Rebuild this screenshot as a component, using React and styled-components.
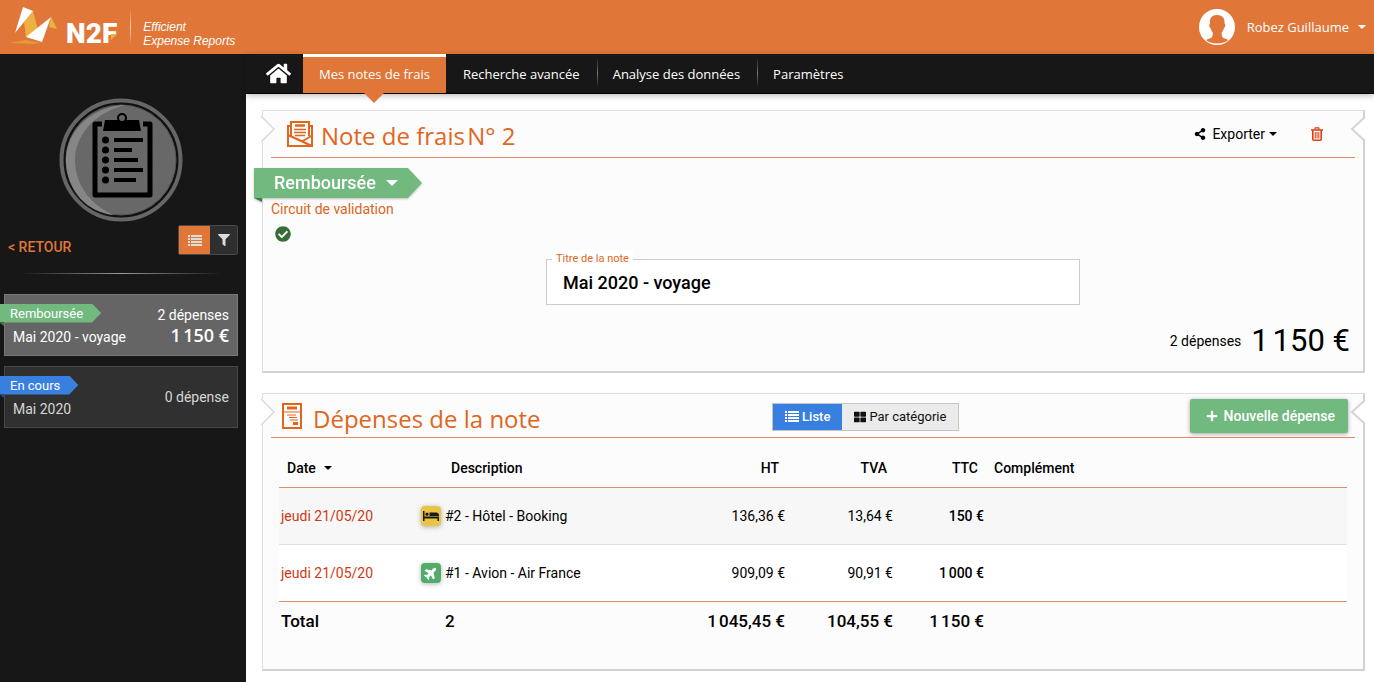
import React from 'react'
import styled, { createGlobalStyle } from 'styled-components'
import { FaHome, FaShareAlt, FaCheckCircle, FaPlus, FaFilter, FaThLarge, FaPlane } from 'react-icons/fa'

const orange = '#e07638'
const green = '#72b980'
const blue = '#3880df'

const BedIcon = () => (
    <svg width="16" height="10" viewBox="0 0 16 10" fill="currentColor" aria-hidden="true">
        <path d="M0 0h1.500v5.500H16V10h-1.500V7.500h-13V10H0z" />
        <circle cx="4" cy="3.200" r="1.600" />
        <path d="M6.500 1.500H13c1.800 0 3 1.200 3 3.200v.3H6.500z" />
    </svg>
)

const notes = [
    { status: 'Remboursée', color: green, fold: '#3f7d4b', title: 'Mai 2020 - voyage', count: '2 dépenses', amount: '1\u202f150 €', selected: true },
    { status: 'En cours', color: blue, fold: '#1c4c8e', title: 'Mai 2020', count: '0 dépense' },
]

const expenses = [
    { date: 'jeudi 21/05/20', icon: <BedIcon />, iconBg: '#eac545', iconColor: '#1b1b1b', label: '#2 - Hôtel - Booking', ht: '136,36 €', tva: '13,64 €', ttc: '150 €' },
    { date: 'jeudi 21/05/20', icon: <FaPlane size={14} />, iconBg: '#50ac66', iconColor: '#fff', tilt: true, label: '#1 - Avion - Air France', ht: '909,09 €', tva: '90,91 €', ttc: '1\u202f000 €' },
]

const ListIcon = () => (
    <svg width="14" height="11" viewBox="0 0 14 11" fill="currentColor" aria-hidden="true">
        {[0, 3, 6, 9].map(y => (
            <g key={y}>
                <rect x="0" y={y} width="2" height="2" />
                <rect x="3" y={y} width="11" height="2" />
            </g>
        ))}
    </svg>
)

const Caret = ({ width = 8 }) => (
    <svg width={width} height={width / 2} viewBox="0 0 8 4" fill="currentColor" aria-hidden="true">
        <path d="M0 0h8L4 4z" />
    </svg>
)

const TrashIcon = () => (
    <svg width="12" height="14" viewBox="0 0 12 14" fill="none" stroke="currentColor" aria-hidden="true">
        <path d="M0 3h12" strokeWidth="1.500" />
        <path d="M3.800 2.800L4.300.8h3.400l.5 2" strokeWidth="1.200" />
        <path d="M1.800 3v9.200c0 .6.4 1 1 1h6.400c.6 0 1-.4 1-1V3" strokeWidth="1.600" />
        <path d="M4.200 5v6.500M6 5v6.500M7.800 5v6.500" />
    </svg>
)

const Bird = () => (
    <svg width="50" height="40" viewBox="0 0 50 40" aria-hidden="true">
        <path d="M1 36l17-3 14 3-6 1z" fill="#e39a3c" />
        <path d="M25 4l-9 11 2 15 3 0 9-7z" fill="#edb143" />
        <path d="M43 10l6 12-8-2z" fill="#edb143" />
        <path d="M15 0l10 4L7 26z" fill="#fff" />
        <path d="M43 10L34 35 18 30z" fill="#fff" />
    </svg>
)

const Avatar = () => (
    <svg width="36" height="36" viewBox="0 0 36 36" aria-hidden="true">
        <circle cx="18" cy="18" r="18" fill="#fff" />
        <path d="M18 6c5 0 8 3 7.500 8 0 1 1 1 .7 3-.3 1.500-1 1.500-1.200 2-.5 2-1.500 3.500-2.300 4.500 0 4 .3 5.500 4.800 6.500 1 .3 1.500 1 1.500 1.600C26 33.500 22 34.500 18 34.500S10 33.500 7.500 31.600c0-.6.5-1.300 1.500-1.600 4.500-1 4.800-2.500 4.800-6.500-.8-1-1.800-2.500-2.300-4.500-.2-.5-.9-.5-1.200-2-.3-2 .7-2 .7-3C10.500 9 13 6 18 6z" fill={orange} />
    </svg>
)

const ClipboardBadge = () => (
    <svg width="124" height="124" viewBox="0 0 124 124" aria-hidden="true">
        <defs>
            <pattern id="weave" width="3" height="3" patternUnits="userSpaceOnUse">
                <rect width="3" height="3" fill="#666" />
                <path d="M0 3L3 0" stroke="#6c6c6c" strokeWidth="1" />
            </pattern>
        </defs>
        <circle cx="62" cy="62" r="59.500" fill="#111" stroke="#666" strokeWidth="4" />
        <circle cx="62" cy="62" r="55" fill="url(#weave)" stroke="#555" />
        <path d="M68 7C36 7 7 31 7 62s22 53 48 55C31 107 16 86 16 62S36 13 68 7z" fill="#868686" />
        <path d="M43 26h-7v71h55V26h-7" fill="none" stroke="#000" strokeWidth="5" strokeLinejoin="round" />
        <path d="M46 22h34l2 11H44z" fill="#000" />
        <circle cx="63" cy="20" r="4" fill="#666" stroke="#000" strokeWidth="2" />
        {[29, 18, 24, 29, 22].map((w, i) => (
            <g key={i}>
                <circle cx="46.500" cy={42 + i * 10} r="3.500" />
                <rect x="55" y={40 + i * 10} width={w} height="4" />
            </g>
        ))}
    </svg>
)

const EnvelopeIcon = () => (
    <svg width="28" height="28" viewBox="0 0 28 28" fill="none" stroke="#e0661c" strokeWidth="2" aria-hidden="true">
        <path d="M5 6L2 6v20h24V6h-3" />
        <path d="M5 16V2h18v14" />
        <path d="M2 15l24 11M26 15.500l-10 6" />
        <path d="M9 5.500h10" strokeWidth="2.500" />
        <path d="M8 9.500h12M8 12.500h12M9 15.500h10" strokeWidth="1.500" />
    </svg>
)

const ReceiptIcon = () => (
    <svg width="22" height="28" viewBox="0 0 22 28" fill="none" stroke="#e0661c" strokeWidth="2" aria-hidden="true">
        <path d="M2 2h18v24H2z" />
        <path d="M6 6h10M12 21.500h5" strokeWidth="3" />
        <path d="M3 10h16" strokeWidth="1" />
        <path d="M6 13h9M8 15.500h8M9 18h8" strokeWidth="1.200" />
    </svg>
)

const Notch = ({ right }) => (
    <NotchBox $right={right}>
        <svg width="16" height="28" viewBox="0 0 16 28" aria-hidden="true">
            {right
                ? <><path d="M16 2L3 14l13 12z" fill="#fff" /><path d="M15 2L2 14l13 12" fill="none" stroke="#d4d4d4" strokeWidth="2" /></>
                : <><path d="M0 0l14 14L0 28z" fill="#fff" /><path d="M0 1l13 13L0 27" fill="none" stroke="#d9d9d9" strokeWidth="1.500" /></>}
        </svg>
    </NotchBox>
)

export default function App() {
    return (
        <Page>
            <GlobalStyle />
            <Header>
                <Brand href="#">
                    <Bird />
                    <BrandName>N2F<i /></BrandName>
                    <BrandLine />
                    <Tagline>Efficient<br />Expense Reports</Tagline>
                </Brand>
                <UserMenu><Avatar /><span>Robez Guillaume</span><Caret /></UserMenu>
            </Header>
            <Body>
                <Sidebar>
                    <BadgeBox><ClipboardBadge /></BadgeBox>
                    <SideTools>
                        <Back href="#">&lt; RETOUR</Back>
                        <ToolGroup>
                            <Tool $on aria-label="Liste"><ListIcon /></Tool>
                            <Tool aria-label="Filtrer"><FaFilter size={12} /></Tool>
                        </ToolGroup>
                    </SideTools>
                    <SideLine />
                    <NoteList>
                        {notes.map(n => (
                            <NoteCard key={n.title} $selected={n.selected}>
                                <div>
                                    <SmallRibbon $color={n.color} $fold={n.fold}><span>{n.status}</span></SmallRibbon>
                                    <NoteTitle>{n.title}</NoteTitle>
                                </div>
                                <NoteFigures>
                                    <span>{n.count}</span>
                                    {n.amount && <strong>{n.amount}</strong>}
                                </NoteFigures>
                            </NoteCard>
                        ))}
                    </NoteList>
                </Sidebar>
                <Main>
                    <Nav>
                        <HomeLink href="#" aria-label="Accueil"><FaHome size={25} /></HomeLink>
                        <NavLink href="#" $active>Mes notes de frais</NavLink>
                        <NavLink href="#">Recherche avancée</NavLink>
                        <NavLink href="#" $line>Analyse des données</NavLink>
                        <NavLink href="#" $line>Paramètres</NavLink>
                    </Nav>
                    <Content>
                        <Panel>
                            <Notch /><Notch right />
                            <PanelHead $height={47}>
                                <Title $indent={15}><EnvelopeIcon /><h1>Note de frais&#8202;N° 2</h1></Title>
                                <Actions>
                                    <Export><FaShareAlt size={12} />Exporter<Caret /></Export>
                                    <Trash aria-label="Supprimer"><TrashIcon /></Trash>
                                </Actions>
                            </PanelHead>
                            <BigRibbon><span>Remboursée<Caret width={12} /></span></BigRibbon>
                            <Circuit href="#">Circuit de validation</Circuit>
                            <Step><FaCheckCircle size={16} /></Step>
                            <Field>
                                <label htmlFor="titre">Titre de la note</label>
                                <input id="titre" type="text" defaultValue="Mai 2020 - voyage" />
                            </Field>
                            <Sum><span>2 dépenses</span><strong>{'1\u202f150 €'}</strong></Sum>
                        </Panel>
                        <Panel>
                            <Notch /><Notch right />
                            <PanelHead $height={44}>
                                <Title $indent={10}><ReceiptIcon /><h2>Dépenses de la note</h2></Title>
                                <ViewSwitch>
                                    <ViewButton $on><ListIcon />Liste</ViewButton>
                                    <ViewButton><FaThLarge size={12} />Par catégorie</ViewButton>
                                </ViewSwitch>
                                <Actions><AddButton><FaPlus size={12} />Nouvelle dépense</AddButton></Actions>
                            </PanelHead>
                            <Table>
                                <colgroup>
                                    <col width="142" /><col width="244" /><col width="122" /><col width="108" /><col width="91" /><col />
                                </colgroup>
                                <thead>
                                    <tr>
                                        <Th><Sort>Date<Caret /></Sort></Th>
                                        <Th $indent>Description</Th>
                                        <Th $right>HT</Th>
                                        <Th $right>TVA</Th>
                                        <Th $right>TTC</Th>
                                        <Th>Complément</Th>
                                    </tr>
                                </thead>
                                <tbody>
                                    {expenses.map(e => (
                                        <tr key={e.label}>
                                            <Td><DateLink href="#">{e.date}</DateLink></Td>
                                            <Td $flush>
                                                <Label>
                                                    <Kind $bg={e.iconBg} $color={e.iconColor} $tilt={e.tilt}>{e.icon}</Kind>
                                                    {e.label}
                                                </Label>
                                            </Td>
                                            <Td $right>{e.ht}</Td>
                                            <Td $right>{e.tva}</Td>
                                            <Td $right $strong>{e.ttc}</Td>
                                            <Td />
                                        </tr>
                                    ))}
                                </tbody>
                                <tfoot>
                                    <tr>
                                        <Td>Total</Td>
                                        <Td $count>2</Td>
                                        <Td $right>{'1\u202f045,45 €'}</Td>
                                        <Td $right>104,55 €</Td>
                                        <Td $right>{'1\u202f150 €'}</Td>
                                        <Td />
                                    </tr>
                                </tfoot>
                            </Table>
                        </Panel>
                    </Content>
                </Main>
            </Body>
        </Page>
    )
}

const GlobalStyle = createGlobalStyle`
* { box-sizing: border-box; }
body {
    margin: 0;
    background: #fff;
    color: #000;
    font-family: Roboto, "Liberation Sans", sans-serif;
    font-size: 14px;
    line-height: 20px;
}
button, input { font: inherit; color: inherit; }
button { border: 0; padding: 0; background: none; cursor: pointer; }
a { text-decoration: none; }
svg { flex-shrink: 0; }
h1, h2 { margin: 0; }
`
const Page = styled.div`
display: flex;
flex-direction: column;
min-height: 100vh;
`
const Header = styled.header`
display: flex;
justify-content: space-between;
align-items: center;
height: 54px;
padding: 0 8px;
background: ${orange};
color: #fff;
`
const Brand = styled.a`
display: flex;
align-items: center;
color: #fff;
`
const BrandName = styled.strong`
position: relative;
margin: 13px 0 0 8px;
font-size: 28px;
font-weight: 900;
line-height: 28px;
i {
    position: absolute;
    right: 0;
    bottom: 8px;
    border-top: 6px solid #edb143;
    border-right: 6px solid transparent;
}
`
const BrandLine = styled.span`
width: 1px;
height: 36px;
margin: 0 12px 0 13px;
background: linear-gradient(transparent, #f6d0b8, transparent);
`
const Tagline = styled.span`
margin-top: 14px;
font-family: "Liberation Sans", sans-serif;
font-size: 12px;
font-style: italic;
line-height: 14px;
`
const UserMenu = styled.button`
display: flex;
align-items: center;
font-family: "Open Sans", sans-serif;
font-size: 13px;
span { margin: 0 9px 0 12px; font-weight: 500; }
`
const Body = styled.div`
display: flex;
flex: 1;
`
const Sidebar = styled.aside`
flex: 0 0 246px;
padding: 44px 8px 0 4px;
background: #171717;
`
const BadgeBox = styled.div`
display: flex;
justify-content: center;
`
const SideTools = styled.div`
display: flex;
justify-content: space-between;
align-items: flex-start;
padding: 3px 0 0 4px;
`
const Back = styled.a`
margin-top: 12px;
color: ${orange};
font-weight: 500;
`
const ToolGroup = styled.div`
display: flex;
border: 1px solid #4a4a4a;
border-radius: 2px;
`
const Tool = styled.button`
display: flex;
align-items: center;
justify-content: center;
width: ${p => p.$on ? 31 : 27}px;
height: 28px;
color: #ddd;
background: ${p => p.$on ? orange : '#2f2f2f'};
`
const SideLine = styled.div`
height: 1px;
margin: 16px 16px 20px;
background: linear-gradient(90deg, transparent, #999, transparent);
`
const NoteList = styled.div`
display: flex;
flex-direction: column;
gap: 10px;
`
const NoteCard = styled.article`
display: flex;
justify-content: space-between;
align-items: center;
height: 62px;
padding: 0 8px;
border: 1px solid ${p => p.$selected ? '#777' : '#484848'};
background: ${p => p.$selected ? '#656565' : '#303030'};
color: ${p => p.$selected ? '#fff' : '#d6d6d6'};
`
const SmallRibbon = styled.div`
position: relative;
width: max-content;
margin-left: -13px;
span {
    display: block;
    height: 19px;
    padding: 0 18px 0 10px;
    font-size: 13px;
    line-height: 19px;
    color: #fff;
    background: ${p => p.$color};
    clip-path: polygon(0 0, calc(100% - 9px) 0, 100% 50%, calc(100% - 9px) 100%, 0 100%);
}
&::after {
    content: '';
    position: absolute;
    left: 0;
    top: 100%;
    border-top: 3px solid ${p => p.$fold};
    border-left: 4px solid transparent;
}
`
const NoteTitle = styled.div`
margin-top: 4px;
`
const NoteFigures = styled.div`
display: flex;
flex-direction: column;
align-items: flex-end;
strong {
    font-family: "Open Sans", sans-serif;
    font-size: 18px;
    font-weight: 600;
}
`
const Main = styled.main`
display: flex;
flex-direction: column;
flex: 1;
min-width: 0;
`
const Nav = styled.nav`
display: flex;
gap: 1px;
height: 40px;
background: #171717;
border-bottom: 1px solid #000;
box-shadow: 0 2px 6px rgba(0, 0, 0, .25);
`
const HomeLink = styled.a`
display: flex;
align-items: center;
width: 56px;
padding-left: 20px;
color: #fff;
`
const NavLink = styled.a`
position: relative;
padding: 0 16px;
font-family: "Open Sans", sans-serif;
font-size: 13px;
font-weight: 500;
line-height: 40px;
color: #fff;
${p => p.$active && `
background: ${orange};
box-shadow: inset 0 3px #fff;
&::after {
    content: '';
    position: absolute;
    top: 100%;
    left: 50%;
    margin-left: -10px;
    border: 10px solid transparent;
    border-top-color: ${orange};
    border-bottom: 0;
}`}
${p => p.$line && `
&::before {
    content: '';
    position: absolute;
    left: 0;
    top: 4px;
    width: 1px;
    height: 30px;
    background: linear-gradient(transparent, #777, transparent);
}`}
`
const Content = styled.div`
display: flex;
flex-direction: column;
gap: 20px;
padding: 16px 9px 11px 16px;
`
const Panel = styled.section`
position: relative;
display: flex;
flex-direction: column;
padding: 0 8px;
background: #fcfcfc;
border: 1px solid #dedede;
border-right: 2px solid #d2d2d2;
border-bottom: 2px solid #d2d2d2;
`
const NotchBox = styled.div`
position: absolute;
top: 4px;
${p => p.$right ? 'right: -3px;' : 'left: -2px;'}
height: 28px;
line-height: 0;
`
const PanelHead = styled.div`
display: grid;
grid-template-columns: 19fr auto 15fr;
align-items: center;
height: ${p => p.$height}px;
border-bottom: 1px solid #e58a66;
`
const Title = styled.div`
display: flex;
align-items: center;
padding-left: ${p => p.$indent}px;
h1, h2 {
    margin: 4px 0 0 7px;
    font-family: "Open Sans", sans-serif;
    font-size: 24px;
    font-weight: 400;
    line-height: 32px;
    color: #e0661c;
    white-space: nowrap;
}
h2 { margin: 6px 0 0 10px; }
`
const Actions = styled.div`
grid-column: 3;
display: flex;
justify-content: flex-end;
align-items: center;
padding-right: 7px;
`
const Export = styled.button`
display: flex;
align-items: center;
gap: 4px;
svg:first-child { margin-right: 2px; }
`
const Trash = styled.button`
display: flex;
margin: 0 25px 0 34px;
color: #dc3c14;
`
const BigRibbon = styled.button`
position: relative;
align-self: flex-start;
margin: 10px 0 0 -17px;
filter: drop-shadow(0 1px 1px rgba(0, 0, 0, .25));
span {
    display: flex;
    align-items: center;
    gap: 10px;
    height: 30px;
    padding: 0 24px 0 20px;
    font-size: 18px;
    font-weight: 500;
    color: #fff;
    background: ${green};
    clip-path: polygon(0 0, calc(100% - 14px) 0, 100% 50%, calc(100% - 14px) 100%, 0 100%);
}
&::after {
    content: '';
    position: absolute;
    left: 0;
    top: 100%;
    border-top: 4px solid #3f7d4b;
    border-left: 8px solid transparent;
}
`
const Circuit = styled.a`
align-self: flex-start;
margin-top: 1px;
color: #dd6420;
`
const Step = styled.div`
display: flex;
margin: 7px 0 0 4px;
color: #396d38;
`
const Field = styled.div`
position: relative;
align-self: center;
width: calc(50% - 8px);
margin-top: 17px;
label {
    position: absolute;
    top: -8px;
    left: 6px;
    padding: 0 4px;
    font-size: 11px;
    line-height: 16px;
    color: #e0661c;
    background: #fff;
}
input {
    display: block;
    width: 100%;
    height: 46px;
    padding: 0 16px;
    border: 1px solid #ccc;
    outline: none;
    background: #fff;
    font-size: 18px;
    font-weight: 500;
}
`
const Sum = styled.div`
display: flex;
justify-content: flex-end;
align-items: center;
gap: 10px;
height: 40px;
margin: 16px 5px 10px;
strong { font-size: 31px; font-weight: 400; line-height: 40px; }
`
const ViewSwitch = styled.div`
display: flex;
margin-top: 2px;
border: 1px solid #c4c4c4;
`
const ViewButton = styled.button`
display: flex;
align-items: center;
gap: 3px;
height: 26px;
padding: 0 12px;
background: ${p => p.$on ? blue : '#ebebeb'};
color: ${p => p.$on ? '#fff' : '#111'};
font-size: 13px;
font-weight: ${p => p.$on ? 500 : 400};
`
const AddButton = styled.button`
display: flex;
align-items: center;
gap: 6px;
height: 34px;
padding: 0 13px 0 16px;
border-radius: 2px;
color: #fff;
background: ${green};
font-weight: 500;
box-shadow: 0 1px 4px rgba(0, 0, 0, .35);
`
const Table = styled.table`
table-layout: fixed;
border-collapse: collapse;
width: calc(100% - 16px);
margin: 0 8px 28px;
thead tr { height: 49px; border-bottom: 1px solid #e58a66; }
tbody tr { height: 57px; border-bottom: 1px solid #e0e0e0; background: #fff; }
tbody tr:first-child { background: #f7f7f7; }
tbody tr:last-child { border-bottom-color: #e58a66; }
tfoot tr { height: 40px; font-size: 17px; font-weight: 500; }
`
const Th = styled.th`
padding: 12px 8px 0 ${p => p.$indent ? 30 : 8}px;
font-weight: 500;
text-align: ${p => p.$right ? 'right' : 'left'};
`
const Sort = styled.button`
display: flex;
align-items: center;
gap: 8px;
font-weight: 500;
`
const Td = styled.td`
padding: 0 2px 0 ${p => p.$flush ? 0 : p.$count ? 24 : 2}px;
text-align: ${p => p.$right ? 'right' : 'left'};
${p => p.$strong && 'font-weight: 500;'}
`
const DateLink = styled.a`
color: #d0380f;
`
const Label = styled.div`
display: flex;
align-items: center;
gap: 4px;
`
const Kind = styled.span`
display: flex;
align-items: center;
justify-content: center;
width: 20px;
height: 20px;
border-radius: 4px;
background: ${p => p.$bg};
color: ${p => p.$color};
box-shadow: 0 1px 5px rgba(0, 0, 0, .3);
svg {
    ${p => p.$tilt && 'transform: rotate(-45deg);'}
}
`
